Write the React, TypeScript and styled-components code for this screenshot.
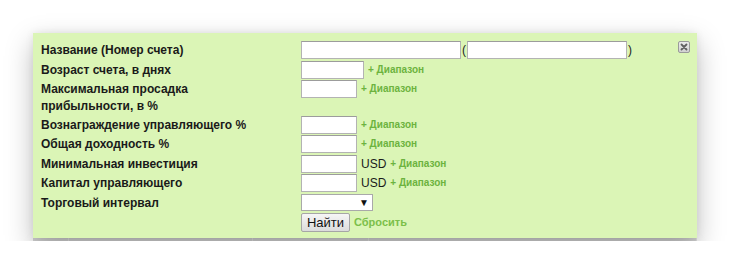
import styled, { createGlobalStyle } from "styled-components";

const Global = createGlobalStyle`
    body{
        margin:0;
        background:#fff;
        font-family:"Liberation Sans", Arial, sans-serif;
    }
`

type Row = {
    label: string;
    width?: number;
    usd?: boolean;
    range?: boolean;
};

const rows: Row[] = [
    {label: 'Возраст счета, в днях', width: 63, range: true},
    {label: 'Максимальная просадка прибыльности, в %', width: 56, range: true},
    {label: 'Вознаграждение управляющего %', width: 56, range: true},
    {label: 'Общая доходность %', width: 56, range: true},
    {label: 'Минимальная инвестиция', width: 56, usd: true, range: true},
    {label: 'Капитал управляющего', width: 56, usd: true, range: true},
];

const CloseIcon = () => (
    <svg width="12" height="12" viewBox="0 0 12 12">
        <defs>
            <linearGradient id="cg" x1="0" y1="0" x2="0" y2="1">
                <stop offset="0" stopColor="#ececec"/>
                <stop offset="1" stopColor="#d0d0d0"/>
            </linearGradient>
        </defs>
        <rect x="0.5" y="0.5" width="11" height="11" rx="1.5" fill="url(#cg)" stroke="#9a9a9a"/>
        <path d="M3.5 3.5 L8.5 8.5 M8.5 3.5 L3.5 8.5" stroke="#606060" strokeWidth="1.8" strokeLinecap="round"/>
    </svg>
)

export default function App() {
    return <Page>
        <Global/>
        <Panel>
            <Close aria-label="close"><CloseIcon/></Close>
            <Form>
                <Label>Название (Номер счета)</Label>
                <Field>
                    <TextInput $w={160}/>
                    <Paren>(</Paren>
                    <TextInput $w={160}/>
                    <Paren>)</Paren>
                </Field>
                {rows.map(r => (
                    <FormRow key={r.label} {...r}/>
                ))}
                <Label>Торговый интервал</Label>
                <Field>
                    <Select>
                        <span>▼</span>
                    </Select>
                </Field>
                <span/>
                <Field>
                    <Button>Найти</Button>
                    <Reset>Сбросить</Reset>
                </Field>
            </Form>
        </Panel>
        <Footer>
            <Cell $w={35}/>
            <Cell $w={183}/>
            <Cell $w={115}/>
            <Cell/>
        </Footer>
    </Page>
}

const FormRow = ({label, width, usd, range}: Row) => <>
    <Label $wrap={label.length > 32}>{label}</Label>
    <Field>
        <TextInput $w={width ?? 56}/>
        {usd && <Usd>USD</Usd>}
        {range && <Range>+ Диапазон</Range>}
    </Field>
</>

const Page = styled.div`
    padding:33px 33px 0;
    width:664px;
`

const Panel = styled.div`
    position:relative;
    background:#dbf5b6;
    padding:8px 8px 8px 8px;
    height:189px;
    box-shadow:0 10px 26px rgba(0,0,0,0.26), 0 0 8px rgba(0,0,0,0.08);
`

const Footer = styled.div`
    display:flex;
    height:3px;
    background:#d6d6d6;
    box-shadow:0 6px 18px rgba(0,0,0,0.2);
`

const Cell = styled.div<{ $w?: number }>`
    flex:${p => p.$w ? `0 0 ${p.$w}px` : '1'};
    border-right:1px solid #e4e4e4;
`

const Close = styled.button`
    position:absolute;
    top:8px;
    right:7px;
    border:0;
    padding:0;
    background:none;
    width:12px;
    height:12px;
    display:block;
`

const Form = styled.div`
    display:grid;
    grid-template-columns:260px 1fr;
    grid-auto-rows:minmax(19px, auto);
    row-gap:0.5px;
`

const Label = styled.div<{ $wrap?: boolean }>`
    font-size:12px;
    font-weight:bold;
    color:#1a1a1a;
    line-height:17px;
    padding-top:1px;
    width:${p => p.$wrap ? '180px' : 'auto'};
`

const Field = styled.div`
    display:flex;
    align-items:flex-start;
    height:19px;
`

const TextInput = styled.input<{ $w: number }>`
    box-sizing:border-box;
    width:${p => p.$w}px;
    height:18px;
    border:1px solid #b3b3b3;
    border-top-color:#9c9c9c;
    background:#fff;
    padding:0 2px;
    margin:0;
    outline:none;
`

const Paren = styled.span`
    font-size:12px;
    line-height:18px;
    color:#222;
    padding:0 1px;
`

const Usd = styled.span`
    font-size:12px;
    line-height:18px;
    color:#1a1a1a;
    margin-left:4px;
`

const Range = styled.span`
    font-size:10px;
    font-weight:bold;
    line-height:18px;
    color:#6cb33e;
    margin-left:4px;
`

const Select = styled.div`
    box-sizing:border-box;
    width:72px;
    height:17px;
    border:1px solid #a9a9a9;
    background:#fff;
    display:flex;
    justify-content:flex-end;
    align-items:center;
    padding-right:3px;
    span{
        font-size:10px;
        color:#111;
    }
`

const Button = styled.button`
    box-sizing:border-box;
    height:19px;
    width:49px;
    padding:0;
    margin:0;
    font-family:"Liberation Sans", Arial, sans-serif;
    font-size:13px;
    color:#111;
    border:1px solid #a6a6a6;
    border-radius:2px;
    background:linear-gradient(#f6f6f6, #dcdcdc);
`

const Reset = styled.span`
    font-size:11px;
    font-weight:bold;
    line-height:19px;
    color:#7cbf4a;
    margin-left:4px;
`
